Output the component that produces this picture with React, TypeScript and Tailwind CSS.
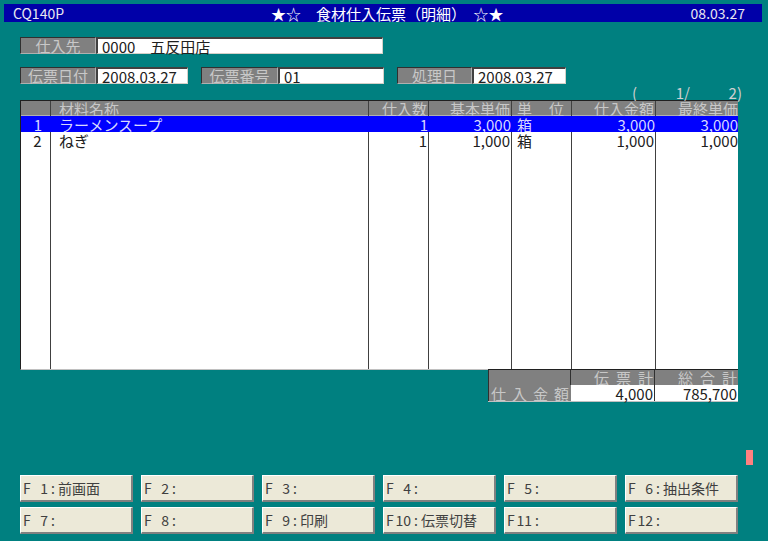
import React from "react";

const cols = [30, 318, 60, 83, 60, 84, 83];

type Row = {
  no: string;
  name: string;
  qty: string;
  price: string;
  unit: string;
  amount: string;
  last: string;
  sel?: boolean;
};

const rows: Row[] = [
  { no: "1", name: "ラーメンスープ", qty: "1", price: "3,000", unit: "箱", amount: "3,000", last: "3,000", sel: true },
  { no: "2", name: "ねぎ", qty: "1", price: "1,000", unit: "箱", amount: "1,000", last: "1,000" },
];

function Label({ text, w }: { text: string; w: string }) {
  return (
    <div
      className={`${w} h-[17px] bg-[#808080] border-t border-l border-[#303030] border-b border-r border-b-[#b0b0b0] border-r-[#b0b0b0] text-[#c8c8c8] flex items-center justify-center`}
    >
      {text}
    </div>
  );
}

function Value({ text, w }: { text: string; w: string }) {
  return (
    <div
      className={`${w} h-[17px] bg-white border-t-2 border-l-2 border-[#404040] border-b border-r border-b-[#d4d0c8] border-r-[#d4d0c8] text-[#202020] flex items-center pl-[4px] whitespace-pre`}
    >
      {text}
    </div>
  );
}

function FKey({ n, text }: { n: string; text: string }) {
  return (
    <div className="w-[113px] h-[27px] bg-[#ece9d8] border-t border-l border-white border-b-2 border-r-2 border-b-[#808080] border-r-[#808080] text-[#404040] text-[14px] flex items-center pl-[2px]">
      <span className="w-[8px]">F</span>
      <span className="w-[17px] text-right">{n}</span>
      <span className="w-[10px] text-center">:</span>
      <span>{text}</span>
    </div>
  );
}

export default function App() {
  const gridCols = "grid grid-cols-[30px_318px_60px_83px_60px_84px_83px]";
  return (
    <div className="w-[768px] h-[541px] bg-[#008080] relative overflow-hidden font-['Noto_Sans_CJK_JP',sans-serif] text-[15px] leading-none">
      {/* title bar */}
      <div className="pt-[4px] pl-[4px]">
        <div className="w-[758px] h-[18px] bg-[#0000a8] flex items-center justify-between px-[9px] text-[#e8e8f0] text-[14px]">
          <span>CQ140P</span>
          <span className="text-[15px] text-white whitespace-pre pl-[20px]">★☆　食材仕入伝票（明細）　☆★</span>
          <span className="pr-[8px]">08.03.27</span>
        </div>
      </div>

      {/* row 1 */}
      <div className="mt-[15px] ml-[20px] flex">
        <Label text="仕入先" w="w-[76px]" />
        <Value text="0000　五反田店" w="w-[287px]" />
      </div>

      {/* row 2 */}
      <div className="mt-[13px] ml-[20px] flex">
        <Label text="伝票日付" w="w-[76px]" />
        <Value text="2008.03.27" w="w-[92px]" />
        <div className="w-[13px]" />
        <Label text="伝票番号" w="w-[77px]" />
        <Value text="01" w="w-[106px]" />
        <div className="w-[13px]" />
        <Label text="処理日" w="w-[75px]" />
        <Value text="2008.03.27" w="w-[94px]" />
      </div>

      {/* page indicator */}
      <div className="h-[16px] flex justify-end items-end pr-[26px] text-[#d0d0d0] whitespace-pre">
        <span>(</span>
        <span className="w-[53px] text-right">1/</span>
        <span className="w-[52px] text-right">2)</span>
      </div>

      {/* table */}
      <div className="ml-[20px] w-[718px] h-[270px] bg-white border-t border-l border-[#202020] border-b border-b-[#c0c0c0] flex flex-col">
        <div className={`${gridCols} h-[15px] bg-[#808080] text-[#c8c8c8] border-b border-[#b0b0b0]`}>
          <div className="border-r border-[#404040]" />
          <div className="border-r border-[#404040] pl-[8px] flex items-center">材料名称</div>
          <div className="border-r border-[#404040] flex items-center justify-end pr-[1px]">仕入数</div>
          <div className="border-r border-[#404040] flex items-center justify-end pr-[1px]">基本単価</div>
          <div className="border-r border-[#404040] flex items-center pl-[5px] gap-[17px]">
            <span>単</span>
            <span>位</span>
          </div>
          <div className="border-r border-[#404040] flex items-center justify-end pr-[1px]">仕入金額</div>
          <div className="flex items-center justify-end pr-[1px]">最終単価</div>
        </div>
        {rows.map((r) => {
          const sel = !!r.sel;
          const cell = sel ? "" : "border-r border-[#404040]";
          return (
            <div
              key={r.no}
              className={`${gridCols} h-[16px] ${sel ? "bg-[#0000ff] text-[#d8d8ff]" : "bg-white text-[#202020]"}`}
            >
              <div className={`${cell} flex items-center justify-center pl-[4px]`}>{r.no}</div>
              <div className={`${cell} flex items-center pl-[8px]`}>{r.name}</div>
              <div className={`${cell} flex items-center justify-end pr-[1px]`}>{r.qty}</div>
              <div className={`${cell} flex items-center justify-end pr-[1px]`}>{r.price}</div>
              <div className={`${cell} flex items-center pl-[5px]`}>{r.unit}</div>
              <div className={`${cell} flex items-center justify-end pr-[1px]`}>{r.amount}</div>
              <div className="flex items-center justify-end pr-[1px]">{r.last}</div>
            </div>
          );
        })}
        <div className={`${gridCols} flex-1`}>
          {cols.map((_, i) => (
            <div key={i} className={i < cols.length - 1 ? "border-r border-[#404040]" : ""} />
          ))}
        </div>
      </div>

      {/* totals */}
      <div className="ml-[488px] -mt-[1px] w-[250px] flex flex-col">
        <div className="grid grid-cols-[83px_84px_83px] h-[16px] bg-[#808080] border-t border-[#202020] text-[#c8c8c8]">
          <div className="border-r border-[#303030] border-l" />
          <div className="border-r border-[#303030] flex items-center justify-end gap-[7px] pr-[1px]">
            <span>伝</span>
            <span>票</span>
            <span>計</span>
          </div>
          <div className="flex items-center justify-end gap-[7px] pr-[1px]">
            <span>総</span>
            <span>合</span>
            <span>計</span>
          </div>
        </div>
        <div className="grid grid-cols-[83px_84px_83px] h-[17px] border-b border-[#c0c0c0]">
          <div className="bg-[#808080] text-[#c8c8c8] flex items-center justify-between px-[2px] border-l border-[#303030]">
            <span>仕</span>
            <span>入</span>
            <span>金</span>
            <span>額</span>
          </div>
          <div className="bg-white text-[#202020] border-r border-[#303030] flex items-center justify-end pr-[1px]">4,000</div>
          <div className="bg-white text-[#202020] flex items-center justify-end pr-[1px]">785,700</div>
        </div>
      </div>

      {/* red indicator */}
      <div className="absolute left-[746px] top-[450px] w-[7px] h-[15px] bg-[#ff8080]" />

      {/* function keys */}
      <div className="mt-[73px] ml-[20px] flex gap-[8px]">
        <FKey n="1" text="前画面" />
        <FKey n="2" text="" />
        <FKey n="3" text="" />
        <FKey n="4" text="" />
        <FKey n="5" text="" />
        <FKey n="6" text="抽出条件" />
      </div>
      <div className="mt-[5px] ml-[20px] flex gap-[8px]">
        <FKey n="7" text="" />
        <FKey n="8" text="" />
        <FKey n="9" text="印刷" />
        <FKey n="10" text="伝票切替" />
        <FKey n="11" text="" />
        <FKey n="12" text="" />
      </div>
    </div>
  );
}
